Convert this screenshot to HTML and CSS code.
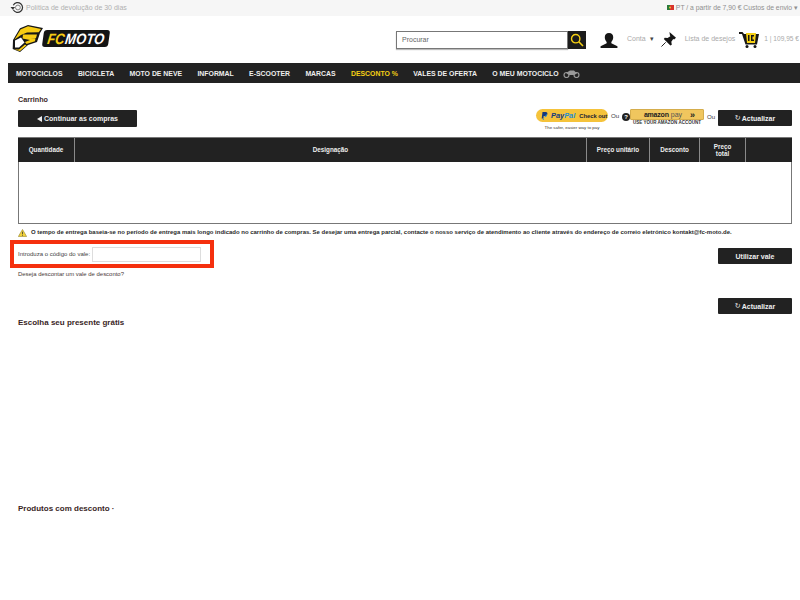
FILE: index.html
```html
<!DOCTYPE html>
<html lang="pt">
<head>
<meta charset="utf-8">
<title>FC-Moto Carrinho</title>
<link rel="stylesheet" href="styles.css">
</head>
<body>
<div class="topbar">
  <div class="top-left">
    <svg class="ret" viewBox="0 0 14 14"><path d="M3 9.500A5.300 5.300 0 1 0 3 4.500" fill="none" stroke="#333" stroke-width="1.300"/><path d="M0 6.500h5l-2.500 3z" fill="#333"/><circle cx="8" cy="7" r="2.600" fill="none" stroke="#777" stroke-width="1"/></svg>
    <span>Política de devolução de 30 dias</span>
  </div>
  <div class="top-right">
    <svg class="flag" viewBox="0 0 7 5"><rect width="3" height="5" fill="#2a7a3a"/><rect x="3" width="4" height="5" fill="#d8332c"/><circle cx="3" cy="2.500" r="1" fill="#e8c33a"/></svg>
    <span>PT / a partir de 7,90 € Custos de envio ▾</span>
  </div>
</div>

<header class="header">
  <div class="logo">
    <svg class="helmet" viewBox="0 0 31 27">
      <path d="M.7 24 1 15 8 3.300 16 0l15 3-3 5-3 9-9 3-8 7z" fill="#161616"/>
      <path d="M2.500 14.500 8.500 4.500 16 1.300l13 2.700-2.300 3.300L15 7.500 9 10z" fill="#f7cc14"/>
      <path d="M11 9.500h14l-1 3.500h-6l5.500.3-.5 3-8.500 2.700-1.500-2 5-2-7.500-1.500z" fill="#f7cc14"/>
      <path d="M3 15.500 9 12.500l3.500 5L7 22.500H3z" fill="#fff"/>
      <path d="M2.200 24.500h4.800l6-5 1.500 1-6.500 5.500z" fill="#f7cc14"/>
    </svg>
    <span class="wordmark"><span class="wm-text"><span class="fc">FC</span><span class="moto">MOTO</span></span></span>
  </div>
  <div class="search">
    <span class="search-box">Procurar</span>
    <span class="search-btn"><svg viewBox="0 0 14 14"><circle cx="5.700" cy="5.700" r="4.200" fill="none" stroke="#f5cf14" stroke-width="1.400"/><path d="M8.800 8.800 13 13" stroke="#f5cf14" stroke-width="1.600"/></svg></span>
  </div>
  <div class="account">
    <svg class="ico-user" viewBox="0 0 18 16"><path d="M9 0c3 0 4.500 2 4.500 4.500 0 2-1 4-2 5v1.500l6.500 3v2H0v-2l6.500-3V9.500c-1-1-2-3-2-5C4.500 2 6 0 9 0z" fill="#161616"/></svg>
    <span class="acct-label">Conta</span><span class="caret">▾</span>
    <svg class="ico-pin" viewBox="0 0 16 16"><path d="M9 0l7 6-2 2-1-.5-2 3 .5 3-1.500 1-7-7 1-1.500 3 .5 3-2-.5-1z" fill="#161616"/><path d="M5 11 .5 15.500" stroke="#161616" stroke-width="1"/></svg>
    <span class="wish-label">Lista de desejos</span>
    <svg class="ico-cart" viewBox="0 0 20 16"><path d="M0 0h3.500l1.500 2h15l-2 10.500H6.500L3 2H0z" fill="#161616"/><circle cx="8" cy="14.500" r="1.500" fill="#161616"/><circle cx="16" cy="14.500" r="1.500" fill="#161616"/><path d="M7 1h10l-1 10H8z" fill="#f5cf14"/><path d="M9 3h1.500v6H9zM12 3h3v1.500h-3zM12 7.500h3V9h-3zM12 4h1.500v4H12z" fill="#161616"/></svg>
    <span class="cart-label">1 | 109,95 €</span>
  </div>
</header>

<nav class="nav">
  <a>MOTOCICLOS</a>
  <a>BICICLETA</a>
  <a>MOTO DE NEVE</a>
  <a>INFORMAL</a>
  <a>E-SCOOTER</a>
  <a>MARCAS</a>
  <a class="sale">DESCONTO %</a>
  <a>VALES DE OFERTA</a>
  <a class="bike-link">O MEU MOTOCICLO
    <svg class="bike" viewBox="0 0 17 9"><circle cx="3.500" cy="6" r="2.500" fill="none" stroke="#999" stroke-width="1.200"/><circle cx="13.500" cy="6" r="2.500" fill="none" stroke="#999" stroke-width="1.200"/><path d="M3 4 7 1.500h4l3 3-3 1.500H6z" fill="#999"/></svg>
  </a>
</nav>

<main class="main">
  <h1 class="crumb">Carrinho</h1>
  <div class="actions">
    <button class="btn btn-continue"><span class="arrow"></span>Continuar as compras</button>
    <div class="pay">
      <div class="paypal">
        <div class="pp-pill"><svg class="pp-p" viewBox="0 0 8 10"><path d="M1.500 0h4c2 0 2.500 1.500 2 3-.5 1.500-2 2-3.500 2H3L2.500 8H.5z" fill="#14387f"/><path d="M6.500 2.500c1 1 .5 4-2.500 4H3.500L3 10H1.500" fill="#1f8ed6"/></svg><span class="pp-word"><span class="pp-a">Pay</span><span class="pp-b">Pal</span></span><span class="pp-check">Check out</span></div>
        <div class="pp-sub">The safer, easier way to pay</div>
      </div>
      <span class="ou">Ou</span>
      <span class="help">?</span>
      <div class="amazon">
        <div class="am-btn"><span class="am-word">amazon</span><span class="am-pay">pay</span><span class="am-arrows">»</span></div>
        <div class="am-sub">USE YOUR AMAZON ACCOUNT</div>
      </div>
      <span class="ou ou-last">Ou</span>
      <button class="btn btn-refresh"><span class="spin">↻</span>Actualizar</button>
    </div>
  </div>

  <div class="cart">
    <div class="cart-head">
      <div class="c-qty">Quantidade</div>
      <div class="c-name">Designação</div>
      <div class="c-unit">Preço unitário</div>
      <div class="c-disc">Desconto</div>
      <div class="c-total">Preço<br>total</div>
      <div class="c-end"></div>
    </div>
    <div class="cart-body"></div>
  </div>

  <p class="notice">
    <svg class="warn" viewBox="0 0 10 9"><path d="M5 .5 9.700 8.500H.3z" fill="#f2d23a" stroke="#8a7a20" stroke-width=".6"/><path d="M5 3v3M5 6.800v.8" stroke="#333" stroke-width=".9"/></svg>
    <span>O tempo de entrega baseia-se no período de entrega mais longo indicado no carrinho de compras. Se desejar uma entrega parcial, contacte o nosso serviço de atendimento ao cliente através do endereço de correio eletrónico kontakt@fc-moto.de.</span>
  </p>

  <div class="voucher-row">
    <div class="voucher">
      <label class="v-label">Introduza o código do vale:</label>
      <span class="v-input"></span>
    </div>
    <button class="btn btn-voucher">Utilizar vale</button>
  </div>
  <p class="v-hint">Deseja descontar um vale de desconto?</p>

  <div class="refresh-row">
    <button class="btn btn-refresh2"><span class="spin">↻</span>Actualizar</button>
  </div>

  <h2 class="sec sec-gift">Escolha seu presente grátis</h2>
  <h2 class="sec sec-sale">Produtos com desconto ·</h2>
</main>
</body>
</html>
```
FILE: styles.css
```css
* { box-sizing: border-box; }
html, body { margin: 0; padding: 0; }
body {
  width: 800px;
  height: 600px;
  overflow: hidden;
  background: #fff;
  font-family: "Liberation Sans", Arial, sans-serif;
  color: #222;
}
.topbar {
  height: 16px;
  background: #f6f6f6;
  display: flex;
  justify-content: space-between;
  align-items: center;
  font-size: 7px;
  color: #b0b0b0;
  padding: 0 2px 1px 10px;
}
.top-left, .top-right { display: flex; align-items: center; white-space: nowrap; }
.ret { width: 14px; height: 13px; margin-right: 2px; }
.flag { width: 7px; height: 5px; margin-right: 2px; }
.top-right { color: #8f8f8f; font-size: 6.800px; }

.header {
  height: 47px;
  display: flex;
  align-items: flex-start;
}
.logo { display: flex; align-items: center; margin: 9px 0 0 12px; width: 384px; flex-shrink: 0; }
.helmet { width: 31px; height: 27px; flex-shrink: 0; }
.wordmark {
  background: #141414;
  border-radius: 3px;
  height: 17px;
  width: 66px;
  transform: skewX(-8deg);
  display: flex;
  align-items: center;
  justify-content: center;
  overflow: hidden;
}
.wm-text {
  display: block;
  font-style: italic;
  font-weight: 700;
  font-size: 13px;
  line-height: 14px;
  white-space: nowrap;
  transform: scaleY(1.150);
}
.fc { color: #f7cc14; margin-right: 1px; letter-spacing: -0.300px; }
.moto { color: #fff; letter-spacing: .100px; }

.search { display: flex; margin: 15px 0 0 0; flex-shrink: 0; }
.search-box {
  width: 172px;
  height: 18px;
  border: 1px solid #777;
  box-shadow: 0 1px 1px #bbb;
  font-size: 7px;
  line-height: 16px;
  padding-left: 5px;
  color: #666;
}
.search-btn {
  width: 18px;
  height: 18px;
  background: #1c1c1c;
  display: flex;
  align-items: center;
  justify-content: center;
}
.search-btn svg { width: 14px; height: 14px; }

.account { display: flex; align-items: flex-start; font-size: 7px; color: #aaa; white-space: nowrap; }
.account svg { flex-shrink: 0; }
.ico-user { width: 18px; height: 15px; margin: 17px 0 0 14px; }
.acct-label { margin: 19px 0 0 9px; }
.caret { margin: 19px 0 0 4px; color: #444; }
.ico-pin { width: 15px; height: 15px; margin: 16px 0 0 7px; }
.wish-label { margin: 19px 0 0 9px; }
.ico-cart { width: 20px; height: 16px; margin: 16px 0 0 4px; }
.cart-label { margin: 19px 0 0 5px; font-size: 6.600px; }

.nav {
  margin-left: 8px;
  height: 20px;
  background: #222;
  display: flex;
  align-items: center;
  padding-left: 8px;
  gap: 15.300px;
  font-size: 6.900px;
  font-weight: 700;
  color: #eee;
  white-space: nowrap;
}
.nav .sale { color: #f5cf14; }
.bike-link { display: flex; align-items: center; gap: 4px; }
.bike { width: 17px; height: 9px; }

.main { padding: 0 8px 0 18px; }
.crumb {
  margin: 12px 0 0;
  font-size: 7.200px;
  line-height: 9px;
  font-weight: 700;
  color: #3a2a2a;
}
.actions {
  display: flex;
  justify-content: space-between;
  align-items: flex-start;
  margin-top: 6px;
  height: 27px;
}
.btn {
  border: 0;
  padding: 0;
  margin: 0;
  background: #222;
  color: #eee;
  font-family: inherit;
  font-weight: 700;
  font-size: 7px;
  border-radius: 1px;
  height: 16px;
  display: flex;
  align-items: center;
  justify-content: center;
  white-space: nowrap;
}
.btn-continue { width: 119px; height: 17px; }
.arrow {
  width: 0;
  height: 0;
  border: 3px solid transparent;
  border-left-width: 0;
  border-right: 5px solid #eee;
  margin-right: 2px;
}
.pay { display: flex; align-items: flex-start; margin-top: -1px; white-space: nowrap; }
.paypal { width: 72px; }
.pp-pill {
  height: 13px;
  background: #f5c33b;
  border-radius: 7px;
  display: flex;
  align-items: center;
  padding-left: 5px;
  font-weight: 700;
}
.pp-p { width: 7px; height: 8px; margin-right: 3px; flex-shrink: 0; }
.pp-word { font-style: italic; font-size: 7.400px; }
.pp-a { color: #14387f; }
.pp-b { color: #1f8ed6; }
.pp-check { margin-left: 4px; color: #223; font-size: 5.800px; }
.pp-sub { font-size: 4.400px; text-align: center; margin-top: 3px; color: #333; }
.ou { width: 8px; font-size: 6.200px; color: #444; margin: 3px 0 0 3px; }
.help {
  width: 8px;
  height: 8px;
  border-radius: 50%;
  background: #222;
  color: #fff;
  font-size: 6px;
  font-weight: 700;
  line-height: 8px;
  text-align: center;
  margin: 4px 0 0 3px;
}
.amazon { width: 74px; }
.am-btn {
  height: 11px;
  background: #f0c65e;
  border: 1px solid #d5ad4c;
  border-radius: 1px;
  display: flex;
  align-items: center;
  justify-content: center;
  font-size: 7px;
  line-height: 8px;
  color: #222;
  padding-left: 5px;
}
.am-word { font-weight: 700; letter-spacing: -0.200px; }
.am-pay { margin-left: 2px; color: #555; }
.am-arrows { margin-left: 8px; font-weight: 700; font-size: 9px; }
.am-sub { font-size: 4.500px; font-weight: 700; text-align: center; margin-top: 0; color: #333; white-space: nowrap; }
.ou-last { margin: 4px 3px 0 3px; }
.btn-refresh { width: 74px; margin-top: 1px; }
.spin { font-size: 7px; margin-right: 1px; font-family: "DejaVu Sans", sans-serif; font-weight: 400; }

.cart { height: 87px; border: 1px solid #777; border-top: 0; display: flex; flex-direction: column; }
.cart-head {
  height: 25px;
  background: #222;
  display: flex;
  color: #eee;
  font-size: 6.300px;
  font-weight: 700;
  text-align: center;
  line-height: 7.500px;
  border-top: 1px solid #777;
  margin: 0 -1px;
}
.cart-head > div {
  display: flex;
  align-items: center;
  justify-content: center;
  border-left: 1px solid #8a8a8a;
}
.cart-head > div:first-child { border-left: 0; }
.c-qty { width: 56px; }
.c-name { width: 512px; }
.c-unit { width: 63px; }
.c-disc { width: 50px; }
.c-total { width: 46px; }
.c-end { width: 47px; }
.cart-body { flex: 1; }

.notice {
  margin: 4px 0 0 0;
  font-size: 5.970px;
  line-height: 9px;
  font-weight: 700;
  color: #2a2a2a;
  white-space: nowrap;
  display: flex;
  align-items: center;
  gap: 4px;
}
.warn { width: 9px; height: 8px; flex-shrink: 0; }

.voucher-row {
  display: flex;
  justify-content: space-between;
  align-items: flex-start;
  margin-top: 3px;
  margin-left: -8px;
}
.voucher {
  width: 204px;
  height: 28px;
  border: 4px solid #f5300e;
  display: flex;
  align-items: center;
  padding-left: 4px;
  font-size: 6px;
  color: #444;
}
.v-input {
  width: 109px;
  height: 15px;
  border: 1px solid #ddd;
  margin-left: 2px;
}
.btn-voucher { width: 74px; margin-top: 8px; }
.v-hint { margin: 2px 0 0; font-size: 5.950px; line-height: 9px; color: #4a3a3a; }
.refresh-row { display: flex; justify-content: flex-end; margin-top: 19px; }
.btn-refresh2 { width: 74px; }
.sec { margin: 0; font-size: 8px; line-height: 10px; font-weight: 700; color: #3a1f1f; }
.sec-gift { margin-top: 4px; }
.sec-sale { margin-top: 176px; }
```
